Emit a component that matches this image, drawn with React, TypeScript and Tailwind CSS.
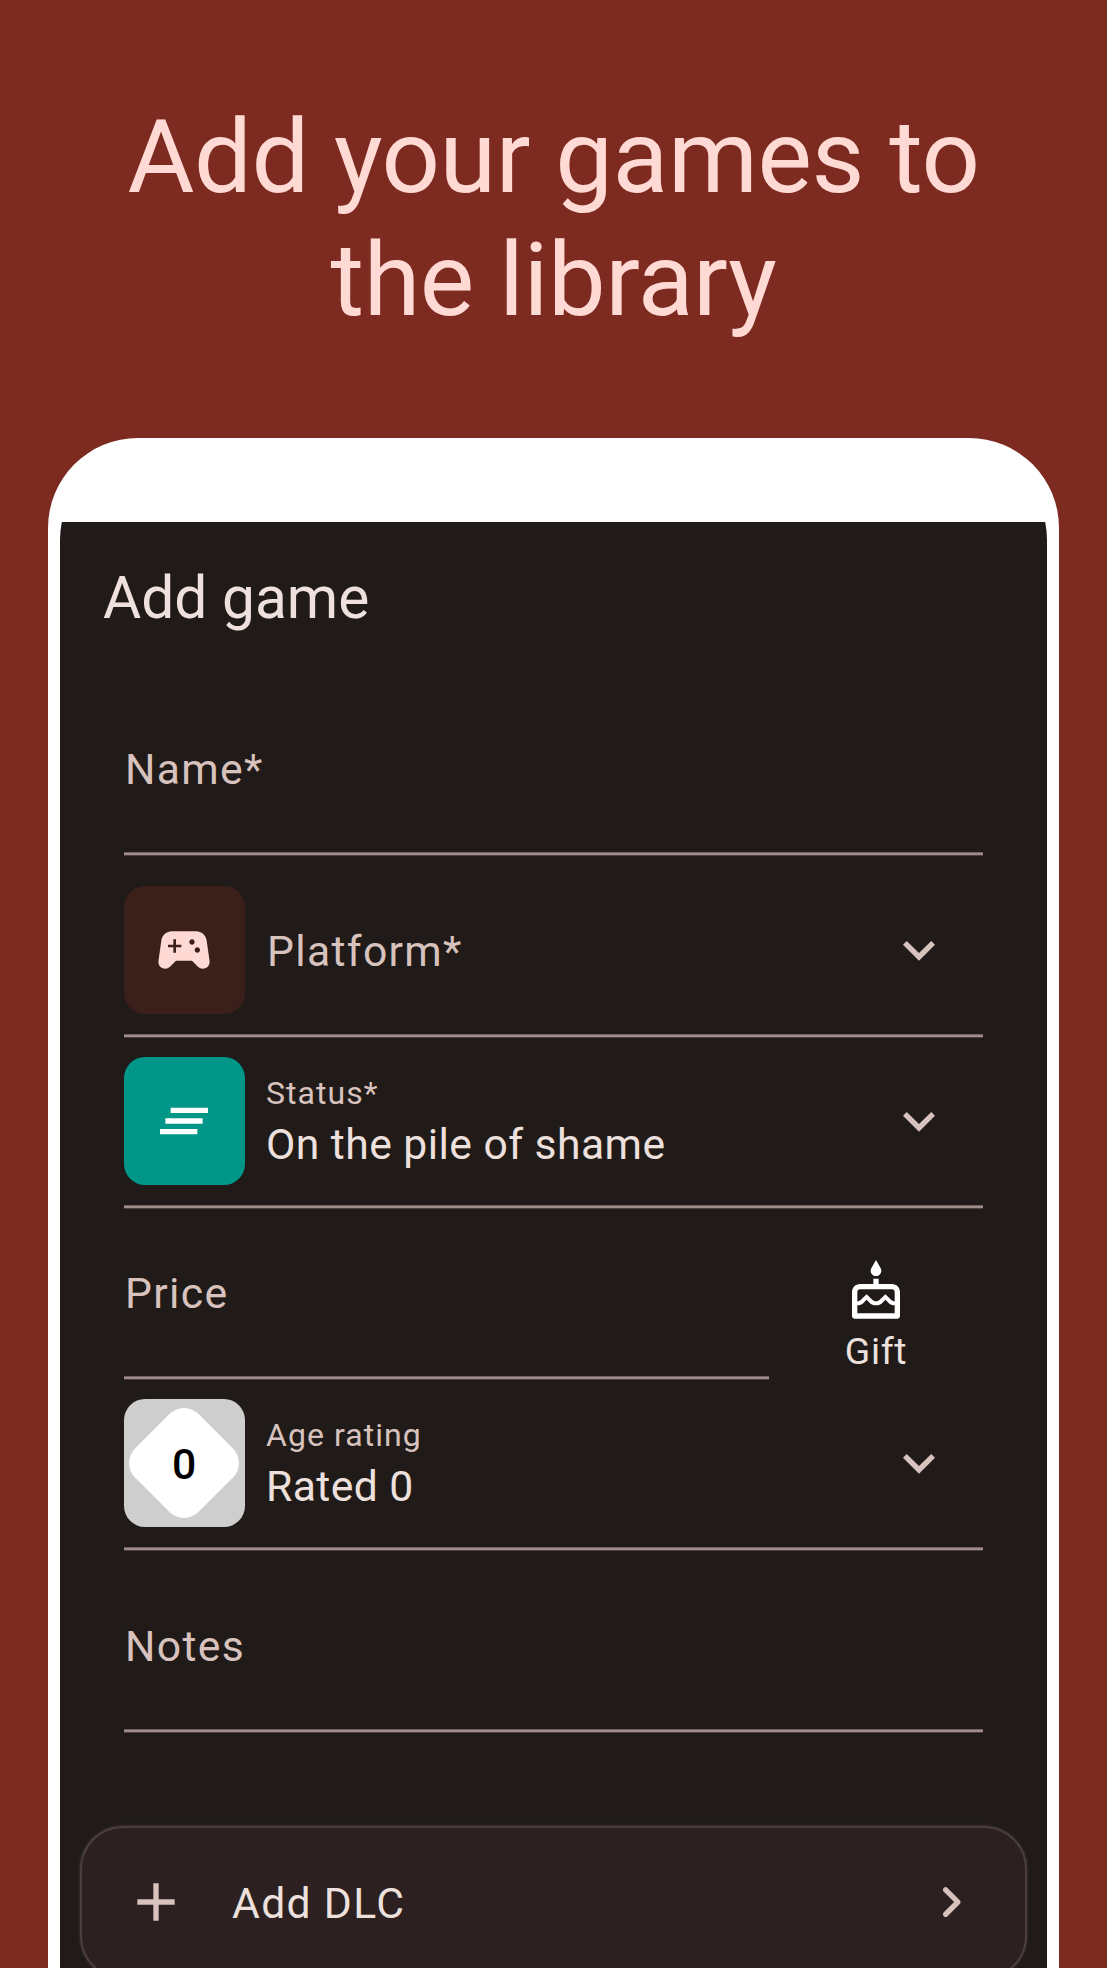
import type { ReactNode } from "react";

function Chevron() {
  return (
    <svg viewBox="0 0 24 24" className="mr-[32.4px] mb-0.5 size-16 shrink-0 fill-[#d8c2be]">
      <path d="M7.41 8.59 12 13.17l4.59-4.58L18 10l-6 6-6-6z" />
    </svg>
  );
}

function Rule() {
  return (
    <div className="shrink-0">
      <div className="h-px bg-[#716361]" />
      <div className="h-0.5 bg-[#a08c89]" />
      <div className="h-px bg-[#4b4140]" />
    </div>
  );
}

function Label({ children }: { children: ReactNode }) {
  return <div className="pl-px text-[42.667px] leading-[64px] tracking-[1.333px] text-[#d8c2be]">{children}</div>;
}

function Field({ children, className }: { children: ReactNode; className: string }) {
  return (
    <div className={`flex flex-col ${className}`}>
      <div className="flex flex-1 items-center">{children}</div>
      <Rule />
    </div>
  );
}

function Picker({ tile, label, value, className }: { tile: ReactNode; label: string; value?: string; className: string }) {
  return (
    <Field className={className}>
      {tile}
      <div className="ml-[21.3px] flex-1">
        {value ? (
          <>
            <div className="text-[32px] leading-[43px] tracking-[1.067px] text-[#d8c2be]">{label}</div>
            <div className="mt-0.5 text-[42.667px] leading-[55px] tracking-[0.45px] text-[#ede0dd]">{value}</div>
          </>
        ) : (
          <Label>{label}</Label>
        )}
      </div>
      <Chevron />
    </Field>
  );
}

const tileBase = "mb-0.5 flex h-32 w-[120.67px] shrink-0 items-center justify-center rounded-[21px]";

export default function App() {
  return (
    <div className="flex h-[1968px] w-[1107px] flex-col overflow-hidden bg-[#7d2b21] font-[Roboto,sans-serif]">
      <h1 className="mt-24 h-[342px] shrink-0 text-center text-[102.667px] leading-[123px] tracking-[-0.4px] text-[#ffdad4]">
        Add your games to
        <br />
        the library
      </h1>
      <div className="mx-12 h-[1620px] shrink-0 rounded-t-[90px] bg-white px-3 pt-3">
        <div className="h-full overflow-hidden rounded-t-[90px]">
          <div className="h-[72px] bg-white" />
          <main className="flex h-[1500px] flex-col bg-[#201b18]">
            <h2 className="mt-[39px] ml-[43px] text-[58.667px] leading-[75px] text-[#ede0dd]">Add game</h2>
            <div className="mx-16 mt-[49px] flex flex-col">
              <Field className="h-[171px]">
                <Label>Name*</Label>
              </Field>
              <Picker
                className="h-[182px] pt-[11px]"
                label="Platform*"
                tile={
                  <div className={`${tileBase} bg-[#3b1f1b]`}>
                    <svg viewBox="0 0 24 24" className="size-16 fill-[#ffdad4]">
                      <path d="M21.58 16.09l-1.09-7.66C20.21 6.46 18.52 5 16.53 5H7.47C5.48 5 3.79 6.46 3.51 8.43l-1.09 7.66C2.2 17.63 3.39 19 4.94 19c.68 0 1.32-.27 1.8-.75L9 16h6l2.25 2.25c.48.48 1.13.75 1.8.75 1.56 0 2.75-1.37 2.53-2.91zM11 11H9v2H8v-2H6v-1h2V8h1v2h2v1zm4-1c-.55 0-1-.45-1-1s.45-1 1-1 1 .45 1 1-.45 1-1 1zm2 3c-.55 0-1-.45-1-1s.45-1 1-1 1 .45 1 1-.45 1-1 1z" />
                    </svg>
                  </div>
                }
              />
              <Picker
                className="h-[171px]"
                label="Status*"
                value="On the pile of shame"
                tile={
                  <div className={`${tileBase} bg-[#009688]`}>
                    <svg viewBox="0 0 24 24" className="size-16 fill-white">
                      <path d="M5 13h14v-2H5v2zm-2 4h14v-2H3v2zM7 7v2h14V7H7z" />
                    </svg>
                  </div>
                }
              />
              <div className="flex">
                <Field className="h-[171px] w-[645px]">
                  <Label>Price</Label>
                </Field>
                <div className="flex flex-1 flex-col items-center pt-[51px]">
                  <svg viewBox="0 0 24 24" className="size-16 fill-white">
                    <path d="M12 6c1.11 0 2-.9 2-2 0-.38-.1-.73-.29-1.03L12 0l-1.71 2.97c-.19.3-.29.65-.29 1.03 0 1.1.9 2 2 2zm6 3h-5V7h-2v2H6c-1.66 0-3 1.34-3 3v9c0 .55.45 1 1 1h16c.55 0 1-.45 1-1v-9c0-1.66-1.34-3-3-3zm1 11H5v-3c.9-.01 1.76-.37 2.4-1.01l1.09-1.07 1.07 1.07c1.31 1.31 3.59 1.3 4.89 0l1.08-1.07 1.09 1.07c.64.64 1.48 1 2.38 1.01v3zm0-4.5c-.51-.01-.99-.2-1.35-.57l-2.13-2.13-2.14 2.13c-.74.74-2.03.74-2.77 0L8.48 12.8l-2.14 2.13c-.35.36-.83.56-1.34.57V12c0-.55.45-1 1-1h12c.55 0 1 .45 1 1v3.5z" />
                  </svg>
                  <div className="mt-px text-[37.333px] leading-[53px] tracking-[0.667px] text-[#ede0dd]">Gift</div>
                </div>
              </div>
              <Picker
                className="h-[171px]"
                label="Age rating"
                value="Rated 0"
                tile={
                  <div className={`${tileBase} bg-[#cecece]`}>
                    <div className="grid size-[90px] rotate-45 place-items-center rounded-[21px] bg-white">
                      <span className="-rotate-45 pt-0.5 text-[42.667px] font-medium text-black">0</span>
                    </div>
                  </div>
                }
              />
              <Field className="h-[182px] pt-[11px]">
                <Label>Notes</Label>
              </Field>
            </div>
            <div className="mx-5 mt-[93px] flex h-[153px] shrink-0 items-center rounded-[43px] border-2 border-[#4a3f3e] bg-[#2c2120] pl-[42px] shadow-[0_0_3px_#4a3f3e]">
              <svg viewBox="0 0 24 24" className="mb-0.5 size-16 fill-[#d8c2be]">
                <path d="M19 13h-6v6h-2v-6H5v-2h6V5h2v6h6z" />
              </svg>
              <div className="ml-[44px] flex-1 text-[42.667px] leading-[64px] tracking-[1.333px] text-[#ede0dd]">Add DLC</div>
              <svg viewBox="0 0 24 24" className="mr-[42px] mb-0.5 size-16 fill-[#d8c2be]">
                <path d="M9.29 15.88 13.17 12 9.29 8.12a.996.996 0 1 1 1.41-1.41l4.59 4.59c.39.39.39 1.02 0 1.41L10.7 17.3a.996.996 0 0 1-1.41 0c-.38-.39-.39-1.03 0-1.42z" />
              </svg>
            </div>
          </main>
        </div>
      </div>
    </div>
  );
}
